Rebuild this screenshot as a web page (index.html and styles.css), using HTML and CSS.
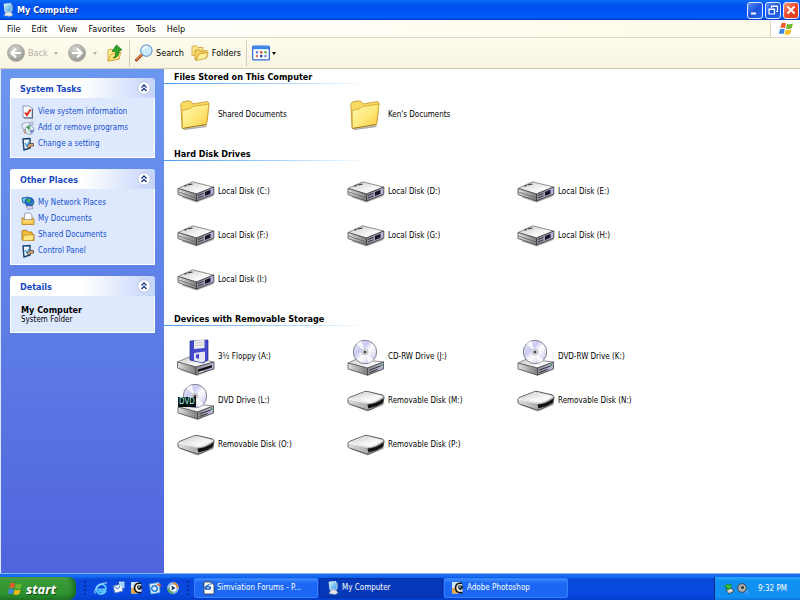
FILE: index.html
```
<!DOCTYPE html>
<html lang="en">

<head>
    <meta charset="UTF-8">
    <meta name="viewport" content="width=device-width, initial-scale=1.0">
    <title>My Computer</title>
    <link rel="stylesheet" href="styles.css">
</head>

<body>
    <!-- Icon sprite -->
    <svg class="sprite" aria-hidden="true">
        <defs>
            <linearGradient id="g-folder" x1="0" y1="0" x2="1" y2="1">
                <stop offset="0" stop-color="#fff9ae"/><stop offset=".5" stop-color="#ffe97e"/><stop offset="1" stop-color="#f8c93e"/>
            </linearGradient>
            <linearGradient id="g-top" x1="0" y1="0" x2="1" y2="1">
                <stop offset="0" stop-color="#c8c8c8"/><stop offset=".6" stop-color="#f6f6f6"/><stop offset="1" stop-color="#fff"/>
            </linearGradient>
            <linearGradient id="g-left" x1="0" y1="0" x2="1" y2="0">
                <stop offset="0" stop-color="#e0e0e0"/><stop offset="1" stop-color="#7c7c7c"/>
            </linearGradient>
            <linearGradient id="g-right" x1="0" y1="0" x2="1" y2="0">
                <stop offset="0" stop-color="#8b8b93"/><stop offset="1" stop-color="#bdb9e4"/>
            </linearGradient>
            <linearGradient id="g-disc" x1="0" y1="0" x2="1" y2="1">
                <stop offset="0" stop-color="#f4f4fb"/><stop offset=".35" stop-color="#c9caf2"/>
                <stop offset=".55" stop-color="#fff"/><stop offset="1" stop-color="#b5b4ea"/>
            </linearGradient>
            <radialGradient id="g-nav" cx=".4" cy=".3" r=".8">
                <stop offset="0" stop-color="#d6d6d2"/><stop offset="1" stop-color="#8f8f8c"/>
            </radialGradient>
            <linearGradient id="g-screen" x1="0" y1="0" x2="1" y2="1">
                <stop offset="0" stop-color="#d5f6ff"/><stop offset="1" stop-color="#2f9be8"/>
            </linearGradient>
        </defs>

        <symbol id="i-folder" viewBox="0 0 30 30">
            <path d="M3 29 26 25.500 27 27 5 30z" fill="#777" opacity=".6"/>
            <path d="M2 28 .8 4 2.500 2 8 .8 11 1.500 13 4 27 1.500 29 3 27 22z" fill="#f9db62" stroke="#bf9228" stroke-width=".8"/>
            <path d="M2.500 28.500 2 10.500 10.500 8.500 12.500 6.500 29 4 26.500 24.500z" fill="url(#g-folder)" stroke="#cf9f2b" stroke-width=".8"/>
            <path d="M2.500 28.500 26.500 24.500" stroke="#8c6a1c" stroke-width=".8"/>
        </symbol>

        <symbol id="i-hdd" viewBox="0 0 37 22">
            <path d="M3 16 19 21.500 36 15V13z" fill="#777" opacity=".6"/>
            <path d="M.5 7.500 15 .8 36 6 19 13z" fill="url(#g-top)" stroke="#777" stroke-width=".8"/>
            <path d="M.5 7.500 19 13V20L.5 13.500z" fill="url(#g-left)" stroke="#444" stroke-width=".8"/>
            <path d="M19 13 36.300 6V13L19 20z" fill="url(#g-right)" stroke="#333" stroke-width=".8"/>
            <path d="M1 11 18.500 17" stroke="#666" stroke-width=".8"/>
            <path d="M27.500 11 33 8.800V12.800L27.500 15z" fill="#151525"/>
            <path d="M20.500 14.500 26 12.300M20.500 17 26 14.800" stroke="#34343c" stroke-width="1"/>
            <path d="M7 5.200 9 4.400M10 4 15 3" stroke="#333" stroke-width="1.200"/>
        </symbol>

        <symbol id="i-removable" viewBox="0 0 37 22">
            <path d="M3 15 20 21.500 36 15V12z" fill="#777" opacity=".6"/>
            <path d="M.5 9Q1 7.500 3 7L16 2Q18 1 20 1.500L35 5Q37 6 36.500 8L35.500 13 23 19.500Q20 20.500 18 19.500L2 14Q.5 13.500.5 12z" fill="url(#g-left)" stroke="#3c3c3c" stroke-width=".8"/>
            <path d="M1 8.500 17 2 20 2 35.800 6Q28 12 20 12.500z" fill="url(#g-top)"/>
            <path d="M1 9 19 13.200Q28 13 36 6.800" fill="none" stroke="#fff" stroke-width=".9"/>
            <path d="M20 14.500Q29 14 36 8.500L35 12.800Q29 17 21 18.500z" fill="#111"/>
        </symbol>

        <symbol id="i-floppy" viewBox="0 0 38 37">
            <path d="M3 31 20 37 37 30V28z" fill="#777" opacity=".6"/>
            <path d="M.5 23 12 18 37 23 19 28z" fill="url(#g-top)" stroke="#777" stroke-width=".8"/>
            <path d="M.5 23 19 28V35.500L.5 29z" fill="url(#g-left)" stroke="#555" stroke-width=".8"/>
            <path d="M19 28 37 23V30L19 35.500z" fill="url(#g-right)" stroke="#444" stroke-width=".8"/>
            <path d="M21 30.500 35 26V28.500L21 33z" fill="#111"/>
            <path d="M22 33.500 26 32" stroke="#eee"/>
            <path d="M13 2 31 1V21L26 24 13 21z" fill="#4348cc" stroke="#24268c" stroke-width=".7"/>
            <path d="M17 1.500 27.500 1V9L17 10z" fill="#f0f0ee"/>
            <path d="M18 4 27 3.400M18 6.500 27 5.900" stroke="#b9b9b9" stroke-width=".7"/>
            <path d="M17 14 28 12.500V22L25 23.500 17 21.500z" fill="#e4e4f4"/>
            <path d="M19 15.500 22 15V20L19 19z" fill="#4348cc"/>
        </symbol>

        <symbol id="i-cd" viewBox="0 0 37 37">
            <path d="M3 31 20 37 36 30V28z" fill="#777" opacity=".6"/>
            <path d="M.5 24 9 20 36 23 20 29z" fill="url(#g-top)" stroke="#777" stroke-width=".8"/>
            <path d="M.5 24 20 29V36L.5 30z" fill="url(#g-left)" stroke="#555" stroke-width=".8"/>
            <path d="M20 29 36 23V30L20 36z" fill="url(#g-right)" stroke="#444" stroke-width=".8"/>
            <path d="M22 31 33 27M22 33.500 30 30.500" stroke="#333"/>
            <circle cx="34" cy="26" r="1" fill="#2aa02a"/>
            <circle cx="17.500" cy="13" r="11.700" fill="url(#g-disc)" stroke="#77778a" stroke-width=".9"/>
            <path d="M17.500 13 9 5A11.700 11.700 0 0 1 14 2z" fill="#fff" opacity=".8"/>
            <path d="M17.500 13 26 21A11.700 11.700 0 0 1 21 24z" fill="#fff" opacity=".8"/>
            <circle cx="17.500" cy="13" r="3" fill="#ececf4" stroke="#999" stroke-width=".6"/>
            <circle cx="17.500" cy="13" r="1.500" fill="#444"/>
        </symbol>

        <symbol id="i-flag" viewBox="0 0 16 16">
            <path d="M3.500 2.500Q6 1 8 2.500L7 7.200Q4.500 6 2.300 7.200z" fill="#f0592a"/>
            <path d="M9 2.800Q11.500 4 15 2.500L13.700 7.200Q11 8.500 8 7.500z" fill="#6cb72c"/>
            <path d="M2 8.300Q4.500 7 6.800 8.300L5.600 13Q3.500 11.800.8 13z" fill="#3d86e8"/>
            <path d="M7.800 8.600Q10.500 9.800 13.400 8.400L12.200 13Q9.500 14.500 6.600 13.200z" fill="#f9bd17"/>
        </symbol>

        <symbol id="i-computer" viewBox="0 0 14 14">
            <path d="M3 1 10 .5 11 8 4 9z" fill="url(#g-screen)" stroke="#dfeaf5" stroke-width=".8"/>
            <path d="M10.500 1 12 2V8L11 8.500z" fill="#5a8fc4"/>
            <path d="M5 9H10L12 12 9 13.500 3 12.500z" fill="#e4e6ea" stroke="#8497ae" stroke-width=".5"/>
        </symbol>

        <symbol id="i-back" viewBox="0 0 18 18">
            <circle cx="9" cy="9" r="8.500" fill="url(#g-nav)" stroke="#a8a8a2" stroke-width=".8"/>
            <path d="M14 9H5M9 4.500 4.500 9 9 13.500" fill="none" stroke="#fff" stroke-width="2.200"/>
        </symbol>

        <symbol id="i-forward" viewBox="0 0 18 18">
            <circle cx="9" cy="9" r="8.500" fill="url(#g-nav)" stroke="#a8a8a2" stroke-width=".8"/>
            <path d="M4 9H13M9 4.500 13.500 9 9 13.500" fill="none" stroke="#fff" stroke-width="2.200"/>
        </symbol>

        <symbol id="i-up" viewBox="0 0 16 18">
            <path d="M1 17V6L5 5 6 7 12 6V15z" fill="url(#g-folder)" stroke="#c99a2a" stroke-width=".8"/>
            <path d="M1 17 4 10 14 8 12 15z" fill="#fbe27a" stroke="#c99a2a" stroke-width=".7"/>
            <path d="M6 14Q9.500 12 8.500 7L5 7.500 9.500 1 15 6 12 6.500Q13 13 6 14z" fill="#2fa52b" stroke="#146b16" stroke-width=".7"/>
        </symbol>

        <symbol id="i-search" viewBox="0 0 19 19">
            <path d="M1.500 17 8 10.500" stroke="#8c3f18" stroke-width="3" stroke-linecap="round"/>
            <path d="M1.800 16 7.500 10.500" stroke="#f08a4c" stroke-width="1.500" stroke-linecap="round"/>
            <circle cx="12" cy="7" r="6" fill="#c9ecfb" stroke="#7fa0cf" stroke-width="1.400"/>
            <path d="M8.500 6Q9.500 3 13 3" fill="none" stroke="#fff" stroke-width="1.500"/>
        </symbol>

        <symbol id="i-folders" viewBox="0 0 18 17">
            <path d="M1 11V2L5 1 7 3 12 3V10z" fill="#fbe487" stroke="#cf9f36" stroke-width=".8"/>
            <path d="M4 15V6L8 5 9.500 7 16 6V13z" fill="#f7d261" stroke="#c8942a" stroke-width=".8"/>
            <path d="M5 16 8 9.500 17 8 15 14z" fill="#fff09c" stroke="#c8942a" stroke-width=".8"/>
        </symbol>

        <symbol id="i-views" viewBox="0 0 19 16">
            <rect x=".7" y=".7" width="17.600" height="14.600" rx="1" fill="#fff" stroke="#2e6cd0" stroke-width="1.300"/>
            <path d="M1 2.500H18" stroke="#3f86ec" stroke-width="3"/>
            <path d="M4 6H6.500V8.500H4zM13 10H15.500V12.500H13z" fill="#7289d8"/>
            <path d="M8.500 6H11V8.500H8.500z" fill="#d24a3a"/>
            <path d="M13 6H15.500V8.500H13z" fill="#56a85a"/>
            <path d="M4 10H6.500V12.500H4z" fill="#d4776a"/>
            <path d="M8.500 10H11V12.500H8.500z" fill="#1f3ea8"/>
        </symbol>

        <symbol id="i-info" viewBox="0 0 14 14">
            <path d="M3 2H9L12 4V13.500H3z" fill="#556"/>
            <path d="M2 1H8.500L11 3.500V12.500H2z" fill="#fff" stroke="#6c7fa8" stroke-width=".8"/>
            <path d="M4 7.500 6 10 9.500 4.500" fill="none" stroke="#e0281c" stroke-width="2"/>
        </symbol>

        <symbol id="i-programs" viewBox="0 0 14 14">
            <path d="M1 3 6 1 9 3V7L4 9 1 7z" fill="#e9eef5" stroke="#8292a8" stroke-width=".7"/>
            <path d="M9 1H12V4H9z" fill="#d8ddea" stroke="#8292a8" stroke-width=".6"/>
            <circle cx="8.500" cy="9" r="4.300" fill="#dff1ee" stroke="#6f83a6" stroke-width=".8"/>
            <path d="M8.500 9 5.500 6.500A4 4 0 0 1 9 5z" fill="#39a34a"/>
            <path d="M8.500 9 12.500 9A4 4 0 0 1 10 12.500z" fill="#7d80dc"/>
            <circle cx="8.500" cy="9" r="1.100" fill="#fff" stroke="#555" stroke-width=".4"/>
            <path d="M2 10H4M3 12H5" stroke="#d0572c"/>
        </symbol>

        <symbol id="i-setting" viewBox="0 0 14 14">
            <path d="M2 2 9 1.500V11L3 13z" fill="#eaf5ff" stroke="#16406e" stroke-width="1.400"/>
            <path d="M4 6 6 9 8 5" fill="none" stroke="#3b90d8" stroke-width="1.300"/>
            <path d="M6 9.500 9 6.500H12.500V9H10L8 11z" fill="#e3ad73" stroke="#3d2a1c" stroke-width=".7"/>
        </symbol>

        <symbol id="i-network" viewBox="0 0 14 14">
            <path d="M1 2 7 1 8 6 2 7z" fill="#6ad0f4" stroke="#22508a" stroke-width=".8"/>
            <circle cx="8.500" cy="6" r="4.500" fill="#2369d2" stroke="#153f85" stroke-width=".6"/>
            <path d="M6 3Q9 2 10 4L8 7 6 6zM10 7 12 6 11 9z" fill="#45b649"/>
            <path d="M5 10H11L12 12.500 7 13.500z" fill="#ddddf2" stroke="#6d6da0" stroke-width=".6"/>
        </symbol>

        <symbol id="i-docs" viewBox="0 0 14 14">
            <path d="M4 1H9L11 3V8H3z" fill="#fff" stroke="#7d8ba6" stroke-width=".8"/>
            <path d="M1 6H3V8H11V6L13 7V12.500H1z" fill="#f8ca4c" stroke="#b47f1c" stroke-width=".8"/>
            <path d="M2 9H12" stroke="#fff2a8"/>
        </symbol>

        <symbol id="i-smallfolder" viewBox="0 0 14 14">
            <path d="M1 12V3L5 2 7 4H11V6L13 6.500V12.500z" fill="#f3bd3d" stroke="#a97819" stroke-width=".9"/>
            <path d="M1.500 12.500 3.500 7H13L12 12.500z" fill="#ffe983" stroke="#b9871f" stroke-width=".6"/>
        </symbol>

        <symbol id="i-ie" viewBox="0 0 14 14">
            <path d="M11.500 8.500H4.500A3 3 0 0 0 10 9.500L11.500 10.500A4.900 4.900 0 1 1 12 7z" fill="none" stroke="#5cc6ff" stroke-width="1.800"/>
            <path d="M1 12.500Q-.5 9 5 4.500 10 .8 13 2" fill="none" stroke="#c4ecff"/>
        </symbol>

        <symbol id="i-mail" viewBox="0 0 14 14">
            <path d="M1 5 9 3 11 10 3 12z" fill="#fff" stroke="#5078b4" stroke-width=".8"/>
            <path d="M1 5 6 8 9 3" fill="none" stroke="#3e78c8"/>
            <path d="M7 1H12V7L9 6z" fill="#8fd0fc" stroke="#e6f6ff" stroke-width=".7"/>
        </symbol>

        <symbol id="i-eye" viewBox="0 0 14 14">
            <path d="M1 1H9V12.500H1z" fill="#cfe5f6"/>
            <path d="M1 7H6V12.500H1z" fill="#e8a648"/>
            <path d="M11 2.500Q5 1 4.500 7 5 12.500 11.500 11.500" fill="#fbf4e6" stroke="#111" stroke-width="1.600"/>
            <path d="M7 5Q10 3 12.500 6L10 9Q7 9 7 5z" fill="#1c1c1c"/>
            <circle cx="9" cy="6" r="1" fill="#63c0ea"/>
        </symbol>

        <symbol id="i-outlook" viewBox="0 0 14 14">
            <path d="M1.500 3 11 1.500 12 11.500 3 13z" fill="#d9efff" stroke="#5fa7e4" stroke-width=".8"/>
            <circle cx="6.500" cy="7.500" r="2.800" fill="none" stroke="#1a78d6" stroke-width="1.400"/>
            <path d="M9 3 13 5" stroke="#e4622c" stroke-width="1.600"/>
        </symbol>

        <symbol id="i-media" viewBox="0 0 14 14">
            <circle cx="7" cy="7" r="4.700" fill="#fff" stroke="#8db8e8" stroke-width="2.400"/>
            <path d="M7 2.300A4.700 4.700 0 0 1 11.700 7" fill="none" stroke="#e88b2c" stroke-width="2"/>
            <path d="M7 11.700A4.700 4.700 0 0 1 2.300 7" fill="none" stroke="#53a650" stroke-width="2"/>
            <path d="M5.700 4.500 9.500 7 5.700 9.500z" fill="#1a3976"/>
        </symbol>

        <symbol id="i-page" viewBox="0 0 14 14">
            <path d="M3 1H10L13 4V13H3z" fill="#fff" stroke="#333" stroke-width=".8"/>
            <path d="M9.500 8H4.500A2.500 2.500 0 1 1 9.500 7.500" fill="none" stroke="#1d5fc8" stroke-width="1.700"/>
            <path d="M1.500 11Q1 8 5 5T11 3" fill="none" stroke="#2a72d8"/>
        </symbol>

        <symbol id="i-eject" viewBox="0 0 12 12">
            <path d="M3 7 8 5 11 8 6 11z" fill="#d5d5d5" stroke="#333" stroke-width=".8"/>
            <path d="M1 4 4 1 6 2 8 1V5L4 7V4z" fill="#35c435" stroke="#126b18" stroke-width=".6"/>
        </symbol>

        <symbol id="i-sound" viewBox="0 0 12 12">
            <circle cx="5" cy="5" r="4.300" fill="#aaa" stroke="#333" stroke-width=".8"/>
            <circle cx="5.500" cy="4.500" r="2.200" fill="#444" stroke="#e8e8e8" stroke-width=".7"/>
            <path d="M8 10 11 7M10 11.500 12 9.500" stroke="#9fb2f2"/>
        </symbol>

        <symbol id="i-chevrons" viewBox="0 0 14 14">
            <circle cx="7" cy="7" r="6.300" fill="#fff" stroke="#b7bfe4" stroke-width="1"/>
            <path d="M4.500 6.500 7 4 9.500 6.500M4.500 10 7 7.500 9.500 10" fill="none" stroke="#16308e" stroke-width="1.300"/>
        </symbol>
    </svg>

    <!-- Title bar -->
    <header class="titlebar">
        <svg class="icon14"><use href="#i-computer"/></svg>
        <h1>My Computer</h1>
        <div class="window-buttons">
            <button type="button" class="win-btn" aria-label="Minimize"><svg viewBox="0 0 14 14"><path d="M3 10.500H8" stroke="#fff" stroke-width="2"/></svg></button>
            <button type="button" class="win-btn" aria-label="Restore"><svg viewBox="0 0 14 14"><path d="M5.500 5V3H11.500V8.500H10M3 6H8.500V11H3zM3 6.500H8.500M5.500 3.500H11.500" fill="none" stroke="#fff" stroke-width="1.200"/></svg></button>
            <button type="button" class="win-btn close" aria-label="Close"><svg viewBox="0 0 14 14"><path d="M3.500 3.500 10.500 10.500M10.500 3.500 3.500 10.500" stroke="#fff" stroke-width="1.900"/></svg></button>
        </div>
    </header>

    <!-- Menu bar -->
    <div class="menubar">
        <nav class="menu">
            <button type="button">File</button>
            <button type="button">Edit</button>
            <button type="button">View</button>
            <button type="button">Favorites</button>
            <button type="button">Tools</button>
            <button type="button">Help</button>
        </nav>
        <div class="throbber"><svg class="flag"><use href="#i-flag"/></svg></div>
    </div>

    <!-- Toolbar -->
    <div class="toolbar">
        <button type="button" class="tool back" disabled><svg class="icon18"><use href="#i-back"/></svg>Back<span class="arrow"></span></button>
        <button type="button" class="tool forward" aria-label="Forward" disabled><svg class="icon18"><use href="#i-forward"/></svg><span class="arrow"></span></button>
        <button type="button" class="tool up" aria-label="Up"><svg class="icon18"><use href="#i-up"/></svg></button>
        <span class="divider"></span>
        <button type="button" class="tool search"><svg class="icon18"><use href="#i-search"/></svg>Search</button>
        <button type="button" class="tool"><svg class="icon18"><use href="#i-folders"/></svg>Folders</button>
        <span class="divider"></span>
        <button type="button" class="tool views" aria-label="Views"><svg class="icon18"><use href="#i-views"/></svg><span class="arrow"></span></button>
    </div>

    <div class="window">
        <!-- Task pane -->
        <aside class="sidebar">
            <section class="panel">
                <div class="panel-head">
                    <h2>System Tasks</h2>
                    <button type="button" aria-label="Collapse System Tasks"><svg class="icon14"><use href="#i-chevrons"/></svg></button>
                </div>
                <ul class="panel-body">
                    <li><a href="#"><svg class="icon14"><use href="#i-info"/></svg>View system information</a></li>
                    <li><a href="#"><svg class="icon14"><use href="#i-programs"/></svg>Add or remove programs</a></li>
                    <li><a href="#"><svg class="icon14"><use href="#i-setting"/></svg>Change a setting</a></li>
                </ul>
            </section>
            <section class="panel">
                <div class="panel-head">
                    <h2>Other Places</h2>
                    <button type="button" aria-label="Collapse Other Places"><svg class="icon14"><use href="#i-chevrons"/></svg></button>
                </div>
                <ul class="panel-body">
                    <li><a href="#"><svg class="icon14"><use href="#i-network"/></svg>My Network Places</a></li>
                    <li><a href="#"><svg class="icon14"><use href="#i-docs"/></svg>My Documents</a></li>
                    <li><a href="#"><svg class="icon14"><use href="#i-smallfolder"/></svg>Shared Documents</a></li>
                    <li><a href="#"><svg class="icon14"><use href="#i-setting"/></svg>Control Panel</a></li>
                </ul>
            </section>
            <section class="panel">
                <div class="panel-head">
                    <h2>Details</h2>
                    <button type="button" aria-label="Collapse Details"><svg class="icon14"><use href="#i-chevrons"/></svg></button>
                </div>
                <div class="panel-body details">
                    <strong>My Computer</strong>
                    <p>System Folder</p>
                </div>
            </section>
        </aside>

        <!-- Drives and folders -->
        <main class="content">
            <section>
                <h2>Files Stored on This Computer</h2>
                <div class="items">
                    <a href="#"><svg class="folder"><use href="#i-folder"/></svg>Shared Documents</a>
                    <a href="#"><svg class="folder"><use href="#i-folder"/></svg>Ken's Documents</a>
                </div>
            </section>
            <section>
                <h2>Hard Disk Drives</h2>
                <div class="items">
                    <a href="#"><svg class="flat"><use href="#i-hdd"/></svg>Local Disk (C:)</a>
                    <a href="#"><svg class="flat"><use href="#i-hdd"/></svg>Local Disk (D:)</a>
                    <a href="#"><svg class="flat"><use href="#i-hdd"/></svg>Local Disk (E:)</a>
                    <a href="#"><svg class="flat"><use href="#i-hdd"/></svg>Local Disk (F:)</a>
                    <a href="#"><svg class="flat"><use href="#i-hdd"/></svg>Local Disk (G:)</a>
                    <a href="#"><svg class="flat"><use href="#i-hdd"/></svg>Local Disk (H:)</a>
                    <a href="#"><svg class="flat"><use href="#i-hdd"/></svg>Local Disk (I:)</a>
                </div>
            </section>
            <section>
                <h2>Devices with Removable Storage</h2>
                <div class="items">
                    <a href="#"><svg class="tall"><use href="#i-floppy"/></svg>3½ Floppy (A:)</a>
                    <a href="#"><svg class="tall"><use href="#i-cd"/></svg>CD-RW Drive (J:)</a>
                    <a href="#"><svg class="tall"><use href="#i-cd"/></svg>DVD-RW Drive (K:)</a>
                    <a href="#"><span class="dvd"><svg class="tall"><use href="#i-cd"/></svg><span class="badge">DVD</span></span>DVD Drive (L:)</a>
                    <a href="#"><svg class="flat"><use href="#i-removable"/></svg>Removable Disk (M:)</a>
                    <a href="#"><svg class="flat"><use href="#i-removable"/></svg>Removable Disk (N:)</a>
                    <a href="#"><svg class="flat"><use href="#i-removable"/></svg>Removable Disk (O:)</a>
                    <a href="#"><svg class="flat"><use href="#i-removable"/></svg>Removable Disk (P:)</a>
                </div>
            </section>
        </main>
    </div>

    <!-- Taskbar -->
    <footer class="taskbar">
        <button type="button" class="start"><svg class="flag"><use href="#i-flag"/></svg>start</button>
        <div class="quick">
            <span class="grip"></span>
            <div class="launchers">
                <a href="#" aria-label="Internet Explorer"><svg class="icon14"><use href="#i-ie"/></svg></a>
                <a href="#" aria-label="Mail"><svg class="icon14"><use href="#i-mail"/></svg></a>
                <a href="#" aria-label="Photoshop"><svg class="icon14"><use href="#i-eye"/></svg></a>
                <a href="#" aria-label="Outlook Express"><svg class="icon14"><use href="#i-outlook"/></svg></a>
                <a href="#" aria-label="Media Player"><svg class="icon14"><use href="#i-media"/></svg></a>
            </div>
            <span class="grip"></span>
        </div>
        <div class="tasks">
            <button type="button"><svg class="icon14"><use href="#i-page"/></svg>Simviation Forums - P...</button>
            <button type="button" class="active"><svg class="icon14"><use href="#i-computer"/></svg>My Computer</button>
            <button type="button"><svg class="icon14"><use href="#i-eye"/></svg>Adobe Photoshop</button>
        </div>
        <div class="tray">
            <svg class="icon12"><use href="#i-eject"/></svg>
            <svg class="icon12"><use href="#i-sound"/></svg>
            <time>9:32 PM</time>
        </div>
    </footer>
</body>

</html>
```
FILE: styles.css
```
* {
    box-sizing: border-box;
}

body {
    display: flex;
    flex-direction: column;
    height: 100vh;
    margin: 0;
    overflow: hidden;
    background: #fff;
    color: #000;
    font-family: "DejaVu Sans Condensed", Tahoma, sans-serif;
    font-size: 8px;
    line-height: 12px;
}

h1, h2, p, ul {
    margin: 0;
    padding: 0;
    font-size: inherit;
}

ul {
    list-style: none;
}

a {
    color: inherit;
    text-decoration: none;
}

button {
    padding: 0;
    border: none;
    background: none;
    color: inherit;
    font: inherit;
    cursor: pointer;
}

svg {
    display: block;
    flex: none;
}

.sprite {
    position: absolute;
    width: 0;
    height: 0;
}

.icon12 { width: 12px; height: 12px; }
.icon14 { width: 14px; height: 14px; }
.icon18 { width: 18px; height: 18px; }
.flag { width: 16px; height: 16px; }

/* Title bar */
.titlebar {
    display: flex;
    align-items: center;
    gap: 2px;
    height: 20px;
    padding: 0 1px;
    background: linear-gradient(#0a6cf8 0, #0a62f4 2px, #0052ec 5px, #0054f4 13px, #0060ff 17px, #003cc4 20px);
    color: #fff;
}

.titlebar h1 {
    flex: 1;
    font-size: 9px;
    font-weight: bold;
    text-shadow: 1px 1px 0 #0a2f94;
}

.window-buttons {
    display: flex;
    gap: 2px;
}

.win-btn {
    width: 16px;
    height: 17px;
    border: 1px solid #dfe8ff;
    border-radius: 3px;
    background: linear-gradient(135deg, #5c8cf8, #1c54dc 50%, #2468ee);
}

.win-btn.close {
    background: linear-gradient(135deg, #f49a80, #ec4a28 50%, #dc3a18);
}

/* Menu bar */
.menubar {
    display: flex;
    height: 18px;
    border-bottom: 1px solid #dcd8c4;
    background: linear-gradient(90deg, #fff 0, #fffdf0 60%, #fcf9e6);
    font-size: 9px;
}

.menu {
    display: flex;
    flex: 1;
    align-items: center;
    gap: 11px;
    padding: 1px 0 0 7px;
}

.throbber {
    display: flex;
    align-items: center;
    justify-content: center;
    width: 30px;
    border-left: 1px solid #dcd8c4;
    background: #fff;
}

/* Toolbar */
.toolbar {
    display: flex;
    align-items: center;
    height: 31px;
    padding-left: 7px;
    border-bottom: 1px solid #cfcab4;
    background: linear-gradient(#fefcee, #f8f4e0);
    font-size: 9px;
}

.tool {
    display: flex;
    align-items: center;
    gap: 3px;
}

.tool:disabled {
    color: #b4b2a6;
}

.arrow {
    border: 2px solid transparent;
    border-top: 3px solid currentColor;
    border-bottom: none;
}

.back {
    width: 61px;
}

.back .arrow {
    margin-left: 3px;
}

.forward {
    gap: 7px;
    width: 38px;
}

.divider {
    width: 1px;
    height: 27px;
    margin: 0 5px;
    background: #d3cfbb;
}

.search {
    margin-right: 7px;
}

.views {
    gap: 2px;
}

/* Window */
.window {
    display: flex;
    flex: 1;
    min-height: 0;
    border-left: 1px solid #dbe8ff;
}

.sidebar {
    display: flex;
    flex-direction: column;
    gap: 11px;
    width: 163px;
    padding: 9px;
    background: linear-gradient(#6c97f0, #5064dc);
}

.panel-head {
    display: flex;
    align-items: center;
    justify-content: space-between;
    height: 20px;
    padding: 0 4px 0 10px;
    border-radius: 3px 3px 0 0;
    background: linear-gradient(90deg, #fff 50%, #c4d4fa);
    color: #1648c4;
    font-size: 9px;
}

.panel-head h2 {
    padding-top: 2px;
}

.panel-body {
    padding: 6px 10px 5px;
    border: 1px solid #fff;
    border-top: none;
    background: #dfe9fd;
}

.panel-body a {
    display: flex;
    align-items: center;
    gap: 3px;
    height: 16px;
    color: #1450d0;
}

.details {
    padding: 9px 10px 7px;
    line-height: 10px;
}

.details strong {
    display: block;
    font-size: 9px;
}

/* Content */
.content {
    flex: 1;
    min-width: 0;
    overflow: hidden;
}

.content section {
    margin-bottom: 9px;
}

.content h2 {
    height: 15px;
    padding: 2px 0 0 10px;
    background: linear-gradient(90deg, #4a9cf0, #cfeaff 160px, #fff 205px) bottom / 100% 1px no-repeat;
    font-size: 9px;
}

.items {
    display: grid;
    grid-template-columns: repeat(auto-fill, 170px);
    padding: 9px 0 0 13px;
}

.items a {
    display: flex;
    align-items: center;
    gap: 3px;
    height: 44px;
}

.flat {
    width: 38px;
    height: 22px;
}

.tall {
    width: 38px;
    height: 37px;
}

.folder {
    width: 30px;
    height: 30px;
    margin: 0 5px 0 3px;
}

.dvd {
    position: relative;
}

.badge {
    position: absolute;
    left: 1px;
    top: 14px;
    padding: 0 1px;
    background: #061212;
    color: #9ff0e4;
    line-height: 10px;
}

/* Taskbar */
.taskbar {
    display: flex;
    align-items: stretch;
    height: 27px;
    border-top: 1px solid #86b0f4;
    background: linear-gradient(#1c70f0 0, #1468f0 3px, #0848dc 5px, #0848e0 20px, #0440cc);
    color: #fff;
}

.start {
    display: flex;
    align-items: center;
    gap: 3px;
    width: 76px;
    margin-top: 3px;
    padding-left: 7px;
    border-radius: 0 8px 8px 0;
    background: linear-gradient(#63b45c 0, #3a9a38 4px, #2f9430 16px, #227a24);
    box-shadow: inset -3px 0 4px #1c6a24;
    font-family: "Noto Sans", sans-serif;
    font-size: 13px;
    font-style: italic;
    font-weight: bold;
    text-shadow: 1px 1px 1px #144a14;
}

.quick {
    display: flex;
    align-items: center;
    justify-content: space-between;
    width: 118px;
    padding: 2px 4px 0 7px;
}

.launchers {
    display: flex;
    gap: 4px;
}

.grip {
    width: 4px;
    height: 16px;
    background: radial-gradient(circle, #0a2c9c 1px, transparent 1px) 0 0 / 4px 4px;
}

.tasks {
    display: flex;
    flex: 1;
    gap: 1px;
    padding: 4px 0 2px;
}

.tasks button {
    display: flex;
    align-items: center;
    gap: 2px;
    width: 124px;
    padding-left: 6px;
    border: 1px solid #3480fa;
    border-radius: 2px;
    background: linear-gradient(#3c88fc, #1c68f4 4px, #1c68f4);
}

.tasks .active {
    border-color: #0430a0;
    background: #0438b8;
}

.tray {
    display: flex;
    align-items: center;
    gap: 2px;
    margin-top: 3px;
    padding: 0 13px 0 8px;
    border-left: 1px solid #062c84;
    background: linear-gradient(#28a8fc 0, #1090f0 4px, #1090f4 20px, #0c78d8);
}

.tray time {
    margin-left: 7px;
}
```
